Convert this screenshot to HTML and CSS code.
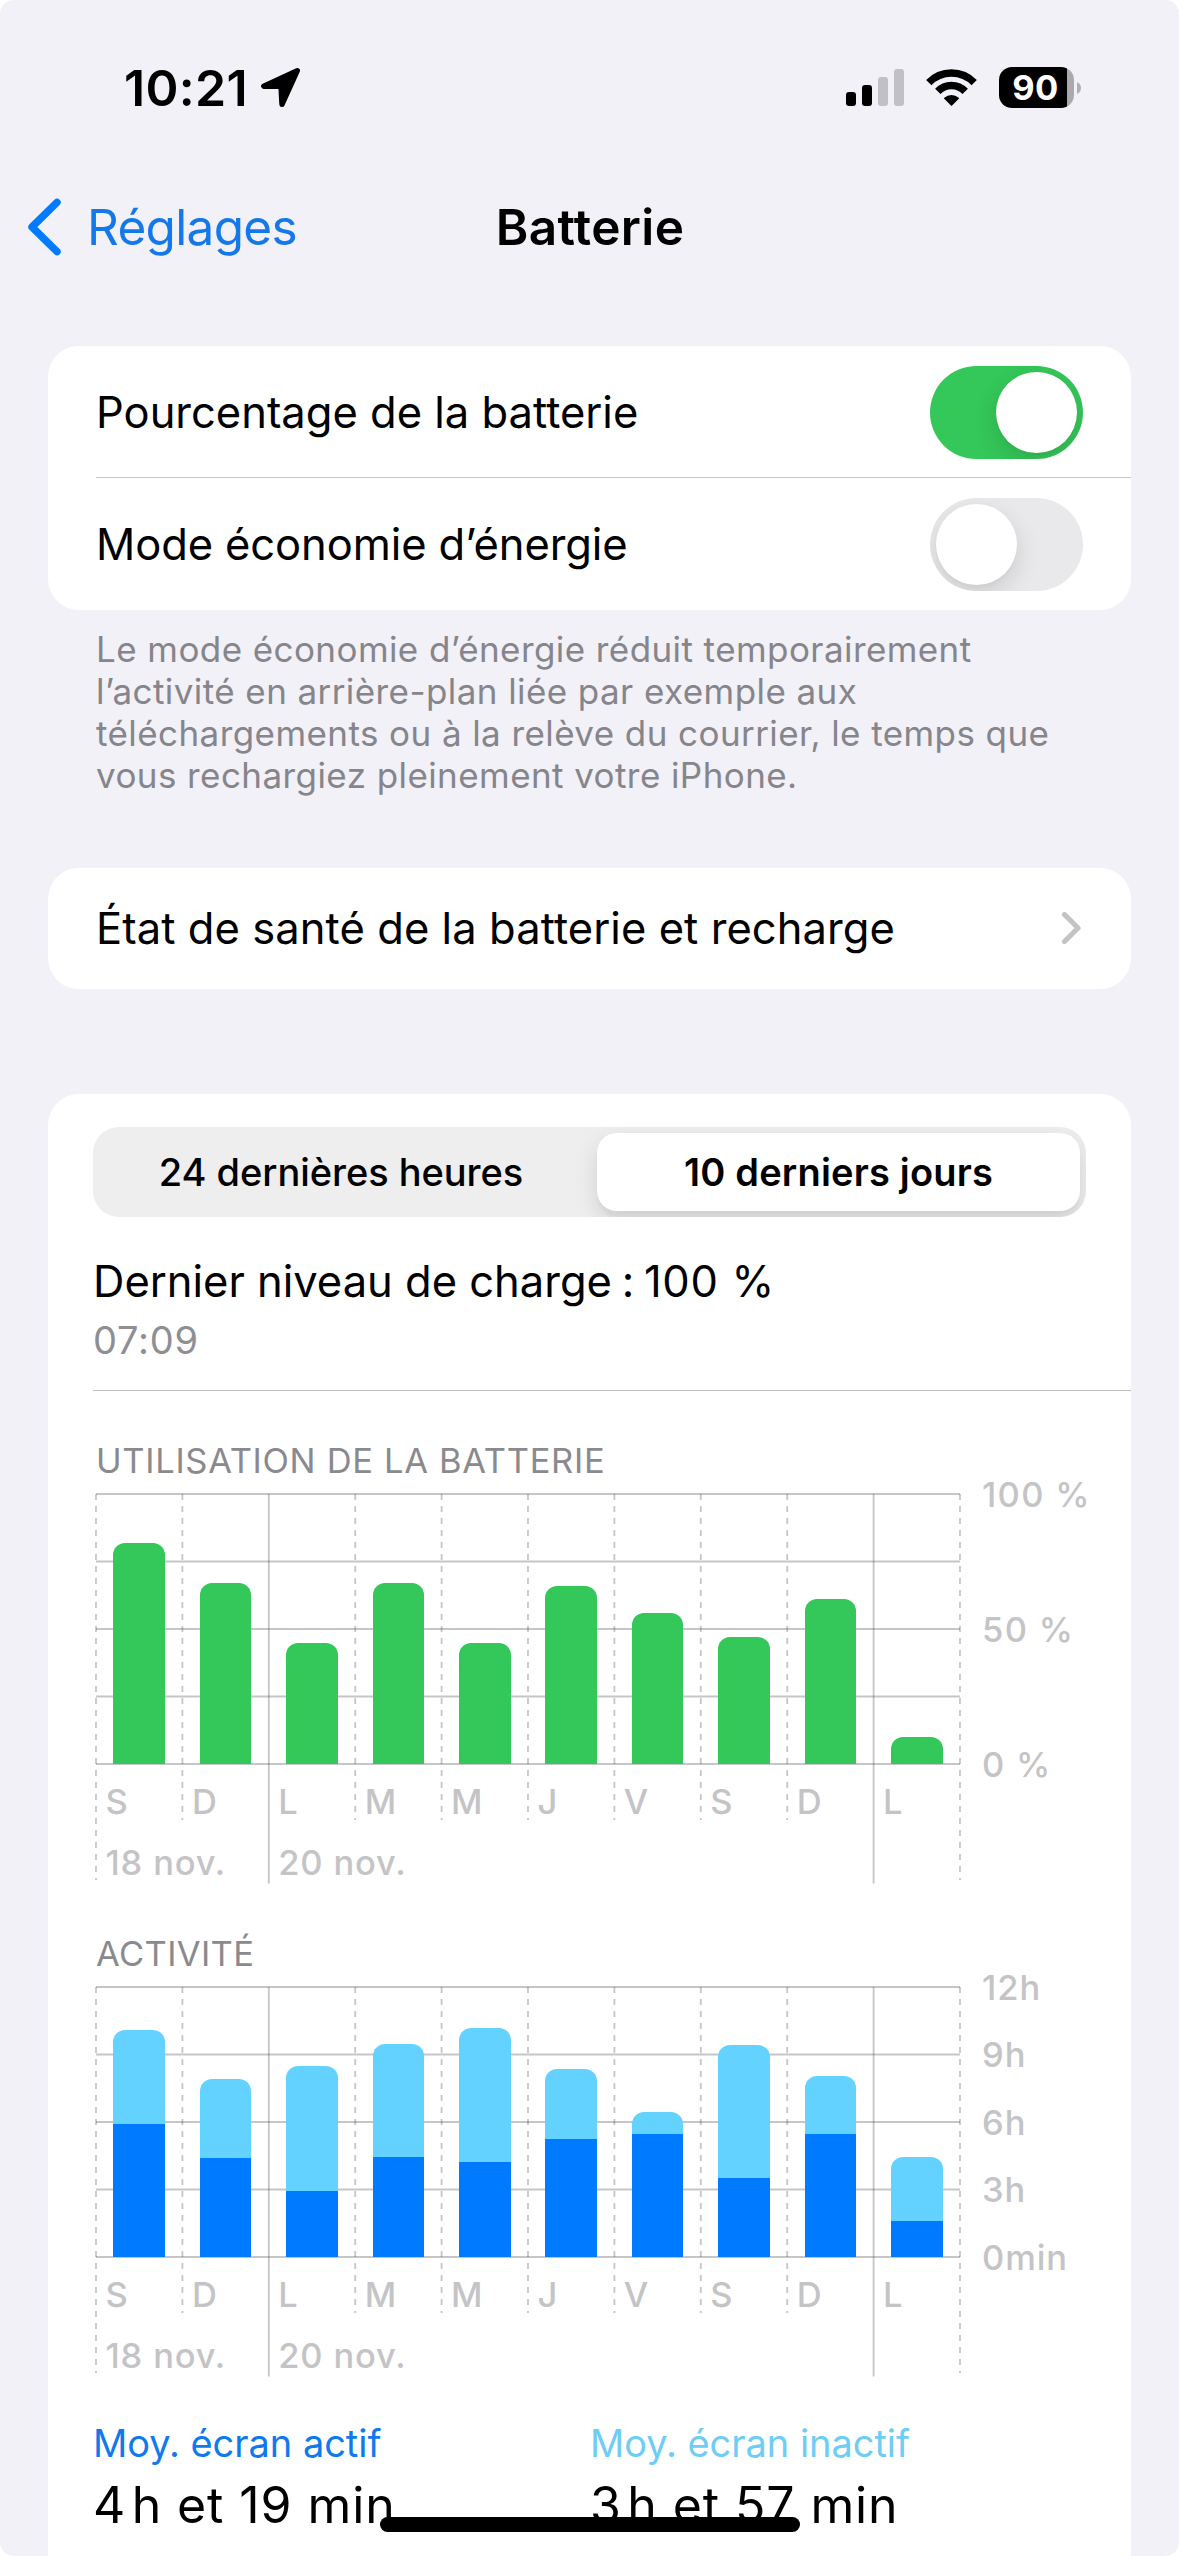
FILE: index.html
```html
<!DOCTYPE html>
<html lang="fr">
<head>
<meta charset="utf-8">
<title>Batterie</title>
<link rel="stylesheet" href="styles.css">
</head>
<body>
<div class="screen">
  <header class="status">
    <div class="status-left">
      <span class="time">10:21</span>
      <svg class="location" width="41" height="41" viewBox="0 0 41 41"><path d="M37.3 3.7 3.8 19.2 21 19.2 22 37.3Z" fill="#000" stroke="#000" stroke-width="5.4" stroke-linejoin="round"/></svg>
    </div>
    <div class="status-right">
      <svg class="signal" width="58" height="37" viewBox="0 0 58 37">
        <rect x="0" y="23" width="10" height="14" rx="3"/>
        <rect x="16" y="16" width="10" height="21" rx="3"/>
        <rect x="32" y="8" width="10" height="29" rx="3" fill="#c1c0c5"/>
        <rect x="48" y="0" width="10" height="37" rx="3" fill="#c1c0c5"/>
      </svg>
      <svg class="wifi" width="51" height="37" viewBox="0 0 51 37">
        <g fill="none" stroke="#000" stroke-width="7.4"><path d="M2.8 13.6A31.5 31.5 0 0 1 48.2 13.6"/><path d="M11.8 22.4A18.8 18.8 0 0 1 39.2 22.4"/></g>
        <path d="M18.8 29.3A10.6 10.6 0 0 1 32.2 29.3L25.5 36Z" stroke="#000" stroke-width="1.6" stroke-linejoin="round"/>
      </svg>
      <div class="battery">
        <span class="battery-level">90</span>
        <svg class="battery-nub" width="4" height="12" viewBox="0 0 4 12"><path d="M0 0Q4 2 4 6T0 12Z" fill="#b0b0b4"/></svg>
      </div>
    </div>
  </header>

  <nav class="nav">
    <a class="back">
      <svg width="35" height="58" viewBox="0 0 35 58"><path d="M30 4.3 5 29 30 53.7" fill="none" stroke="#007aff" stroke-width="7.4" stroke-linecap="round" stroke-linejoin="round"/></svg>
      <span>Réglages</span>
    </a>
    <h1 class="nav-title">Batterie</h1>
  </nav>

  <section class="card">
    <div class="row row-line">
      <span>Pourcentage de la batterie</span>
      <span class="toggle toggle-on"><i class="knob"></i></span>
    </div>
    <div class="row row-saver">
      <span>Mode économie d’énergie</span>
      <span class="toggle"><i class="knob"></i></span>
    </div>
  </section>
  <p class="note">Le mode économie d’énergie réduit temporairement<br>l’activité en arrière-plan liée par exemple aux<br>téléchargements ou à la relève du courrier, le temps que<br>vous rechargiez pleinement votre iPhone.</p>

  <section class="card health">
    <div class="row row-link">
      <span>État de santé de la batterie et recharge</span>
      <svg width="21" height="34" viewBox="0 0 21 34"><path d="M3.5 3.5 17 17 3.5 30.5" fill="none" stroke="#c4c4c7" stroke-width="5.2" stroke-linecap="round" stroke-linejoin="round"/></svg>
    </div>
  </section>

  <section class="card usage">
    <div class="segmented">
      <span class="segment">24 dernières heures</span>
      <span class="segment segment-active">10 derniers jours</span>
    </div>
    <div class="last-charge">
      <p class="charge-title">Dernier niveau de charge<span class="charge-colon"> : </span><span class="charge-value">100 %</span></p>
      <p class="charge-time">07:09</p>
    </div>

    <section class="chart">
      <h2 class="chart-title chart-title-wide">UTILISATION DE LA BATTERIE</h2>
      <div class="chart-body">
        <div class="plot">
          <svg class="grid" width="864" height="390" viewBox="0 0 864 390">
            <g id="grid" fill="none" stroke="#3c3c43" stroke-opacity=".29" stroke-width="1.8">
              <path d="M0 0H864M0 67.5H864M0 135H864M0 202.5H864M0 270H864"/>
              <path d="M172.8 0V389.5M777.6 0V389.5"/>
              <path stroke-dasharray="6 6" d="M0 0V386M864 0V386M86.4 0V326M259.2 0V326M345.6 0V326M432 0V326M518.4 0V326M604.8 0V326M691.2 0V326"/>
            </g>
          </svg>
          <div class="bars">
            <i class="bar level" style="height:82%"></i>
            <i class="bar level" style="height:67%"></i>
            <i class="bar level" style="height:45%"></i>
            <i class="bar level" style="height:67%"></i>
            <i class="bar level" style="height:45%"></i>
            <i class="bar level" style="height:66%"></i>
            <i class="bar level" style="height:56%"></i>
            <i class="bar level" style="height:47%"></i>
            <i class="bar level" style="height:61%"></i>
            <i class="bar level" style="height:10%"></i>
          </div>
          <div class="days"><span>S</span><span>D</span><span>L</span><span>M</span><span>M</span><span>J</span><span>V</span><span>S</span><span>D</span><span>L</span></div>
          <div class="dates"><span>18 nov.</span><span>20 nov.</span></div>
        </div>
        <div class="scale scale-percent"><span>100 %</span><span>50 %</span><span>0 %</span></div>
      </div>
    </section>

    <section class="chart">
      <h2 class="chart-title">ACTIVITÉ</h2>
      <div class="chart-body">
        <div class="plot">
          <svg class="grid" width="864" height="390" viewBox="0 0 864 390"><use href="#grid"/></svg>
          <div class="bars">
            <i class="bar idle" style="height:227px"><b class="active" style="height:133px"></b></i>
            <i class="bar idle" style="height:178px"><b class="active" style="height:99px"></b></i>
            <i class="bar idle" style="height:191px"><b class="active" style="height:66px"></b></i>
            <i class="bar idle" style="height:213px"><b class="active" style="height:100px"></b></i>
            <i class="bar idle" style="height:229px"><b class="active" style="height:95px"></b></i>
            <i class="bar idle" style="height:188px"><b class="active" style="height:118px"></b></i>
            <i class="bar idle" style="height:145px"><b class="active" style="height:123px"></b></i>
            <i class="bar idle" style="height:212px"><b class="active" style="height:79px"></b></i>
            <i class="bar idle" style="height:181px"><b class="active" style="height:123px"></b></i>
            <i class="bar idle" style="height:100px"><b class="active" style="height:36px"></b></i>
          </div>
          <div class="days"><span>S</span><span>D</span><span>L</span><span>M</span><span>M</span><span>J</span><span>V</span><span>S</span><span>D</span><span>L</span></div>
          <div class="dates"><span>18 nov.</span><span>20 nov.</span></div>
        </div>
        <div class="scale"><span>12h</span><span>9h</span><span>6h</span><span>3h</span><span>0min</span></div>
      </div>
    </section>

    <div class="averages">
      <div>
        <p class="avg-label avg-on">Moy. écran actif</p>
        <p class="avg-value">4&#8202;h et 19 min</p>
      </div>
      <div>
        <p class="avg-label avg-off">Moy. écran inactif</p>
        <p class="avg-value">3&#8202;h et 57 min</p>
      </div>
    </div>
  </section>
  <div class="home-indicator"></div>
</div>
</body>
</html>
```

FILE: styles.css
```css
* { box-sizing: border-box; margin: 0; padding: 0; }
body { background: #fff; }
.screen {
  position: relative;
  display: flex;
  flex-direction: column;
  width: 1179px;
  height: 2556px;
  overflow: hidden;
  border-radius: 14px;
  background: #f2f1f7;
  color: #000;
  font-family: Inter, "Liberation Sans", sans-serif;
  font-size: 43.5px;
  white-space: nowrap;
}
svg { display: block; flex: none; }

/* Status bar */
.status { display: flex; justify-content: space-between; align-items: center; height: 175px; padding: 0 98px 0 124px; flex: none; }
.status-left { display: flex; align-items: center; gap: 12px; }
.time { font-size: 50px; font-weight: 600; line-height: 60px; letter-spacing: .3px; }
.status-right { display: flex; align-items: center; gap: 22px; }
.battery { display: flex; align-items: center; gap: 3px; }
.battery-level {
  width: 75px; height: 41px; border-radius: 13px;
  background: linear-gradient(90deg, #000 68px, #a9a9ae 68px);
  color: #fff; font-size: 34.5px; font-weight: 650; line-height: 41px;
  text-align: center; padding-right: 2px; letter-spacing: .3px;
}

/* Navigation bar */
.nav { display: grid; grid-template-columns: 1fr auto 1fr; align-items: center; height: 104px; padding: 0 26px 0 27px; margin-bottom: 67px; flex: none; }
.back { display: flex; align-items: center; gap: 25px; color: #1478ea; font-size: 49.5px; line-height: 60px; letter-spacing: -.69px; }
.nav-title { font-size: 49.5px; font-weight: 600; line-height: 60px; letter-spacing: .38px; }

/* Grouped cards */
.card { flex: none; margin: 0 48px; border-radius: 31px; background: #fff; }
.row { display: flex; justify-content: space-between; align-items: center; height: 132px; margin-left: 48px; padding-right: 48px; }
.row-line { box-shadow: inset 0 -1px #c6c6c8; }
.row-saver { letter-spacing: -.1px; }
.row-link { height: 120px; margin-bottom: 1px; padding-right: 49px; letter-spacing: .07px; }
.toggle { display: flex; width: 153px; height: 93px; padding: 6px; border-radius: 47px; background: #e9e9eb; overflow: hidden; }
.toggle-on { justify-content: flex-end; background: #34c759; }
.knob { width: 81px; height: 81px; border-radius: 50%; background: #fff; box-shadow: 0 9px 24px rgba(0, 0, 0, .13), 0 3px 3px rgba(0, 0, 0, .02); }
.note { flex: none; margin: 18px 96px 72px; color: #85858b; font-size: 35px; line-height: 42px; letter-spacing: .42px; }
.health { margin-bottom: 105px; }

/* Usage card */
.usage { flex: 1; padding: 33px 0 0 45px; border-radius: 31px 31px 0 0; }
.segmented { display: grid; grid-template-columns: 498px 483px; height: 90px; width: 993px; padding: 6px; border-radius: 26px; background: #eeeeef; overflow: hidden; }
.segment { display: flex; align-items: center; justify-content: center; font-size: 38px; font-weight: 500; letter-spacing: -.05px; padding-right: 14px; }
.segment-active { padding: 0; border-radius: 20px; background: #fff; font-weight: 600; letter-spacing: .19px; box-shadow: 0 9px 24px rgba(0, 0, 0, .12), 0 6px 3px rgba(0, 0, 0, .03); }
.last-charge { padding: 34px 0 25px; border-bottom: 1px solid #c0c0c2; }
.charge-title { line-height: 60px; }
.charge-colon { word-spacing: -2.5px; }
.charge-value { letter-spacing: .7px; }
.charge-time { margin-top: 4px; color: #8e8e93; font-size: 38px; line-height: 50px; letter-spacing: .78px; }

/* Charts */
.chart { padding: 48px 0 0 3px; }
.chart-title { height: 42px; color: #8a8a8e; font-size: 34.5px; font-weight: 400; line-height: 43px; letter-spacing: .35px; }
.chart-title-wide { letter-spacing: .67px; }
.chart-body { display: flex; gap: 22px; margin-top: 13px; }
.plot { position: relative; width: 864px; height: 390px; color: #c4c4c6; font-size: 34.5px; font-weight: 500; }
.grid { position: absolute; left: 0; top: 0; overflow: visible; }
.bars { position: relative; display: grid; grid-template-columns: repeat(10, 86.4px); justify-items: center; align-items: end; height: 270px; }
.bar { display: flex; align-items: flex-end; width: 51.6px; border-radius: 12px 12px 0 0; overflow: hidden; }
.level { background: #34c759; }
.idle { background: #64d2ff; }
.active { width: 100%; background: #007aff; }
.days { display: grid; grid-template-columns: repeat(10, 86.4px); padding-left: 9.5px; margin-top: 17px; line-height: 42px; }
.dates { display: grid; grid-template-columns: 172.8px auto; padding-left: 9.5px; margin-top: 19px; line-height: 42px; letter-spacing: .8px; }
.scale { display: flex; flex-direction: column; justify-content: space-between; height: 312px; margin-top: -20.5px; color: #c4c4c6; font-size: 34.5px; font-weight: 500; line-height: 42px; letter-spacing: .9px; }
.scale-percent { letter-spacing: 1.3px; }

/* Daily averages */
.averages { display: grid; grid-template-columns: 497px auto; margin-top: 41px; }
.avg-label { font-size: 38px; line-height: 50px; letter-spacing: -.04px; }
.avg-on { color: #1079ee; }
.avg-off { color: #6fccf4; }
.avg-value { margin-top: 7px; font-size: 50px; line-height: 60px; letter-spacing: .9px; }

.home-indicator { position: absolute; left: 380px; bottom: 24px; width: 420px; height: 15px; border-radius: 8px; background: #000; }
```
